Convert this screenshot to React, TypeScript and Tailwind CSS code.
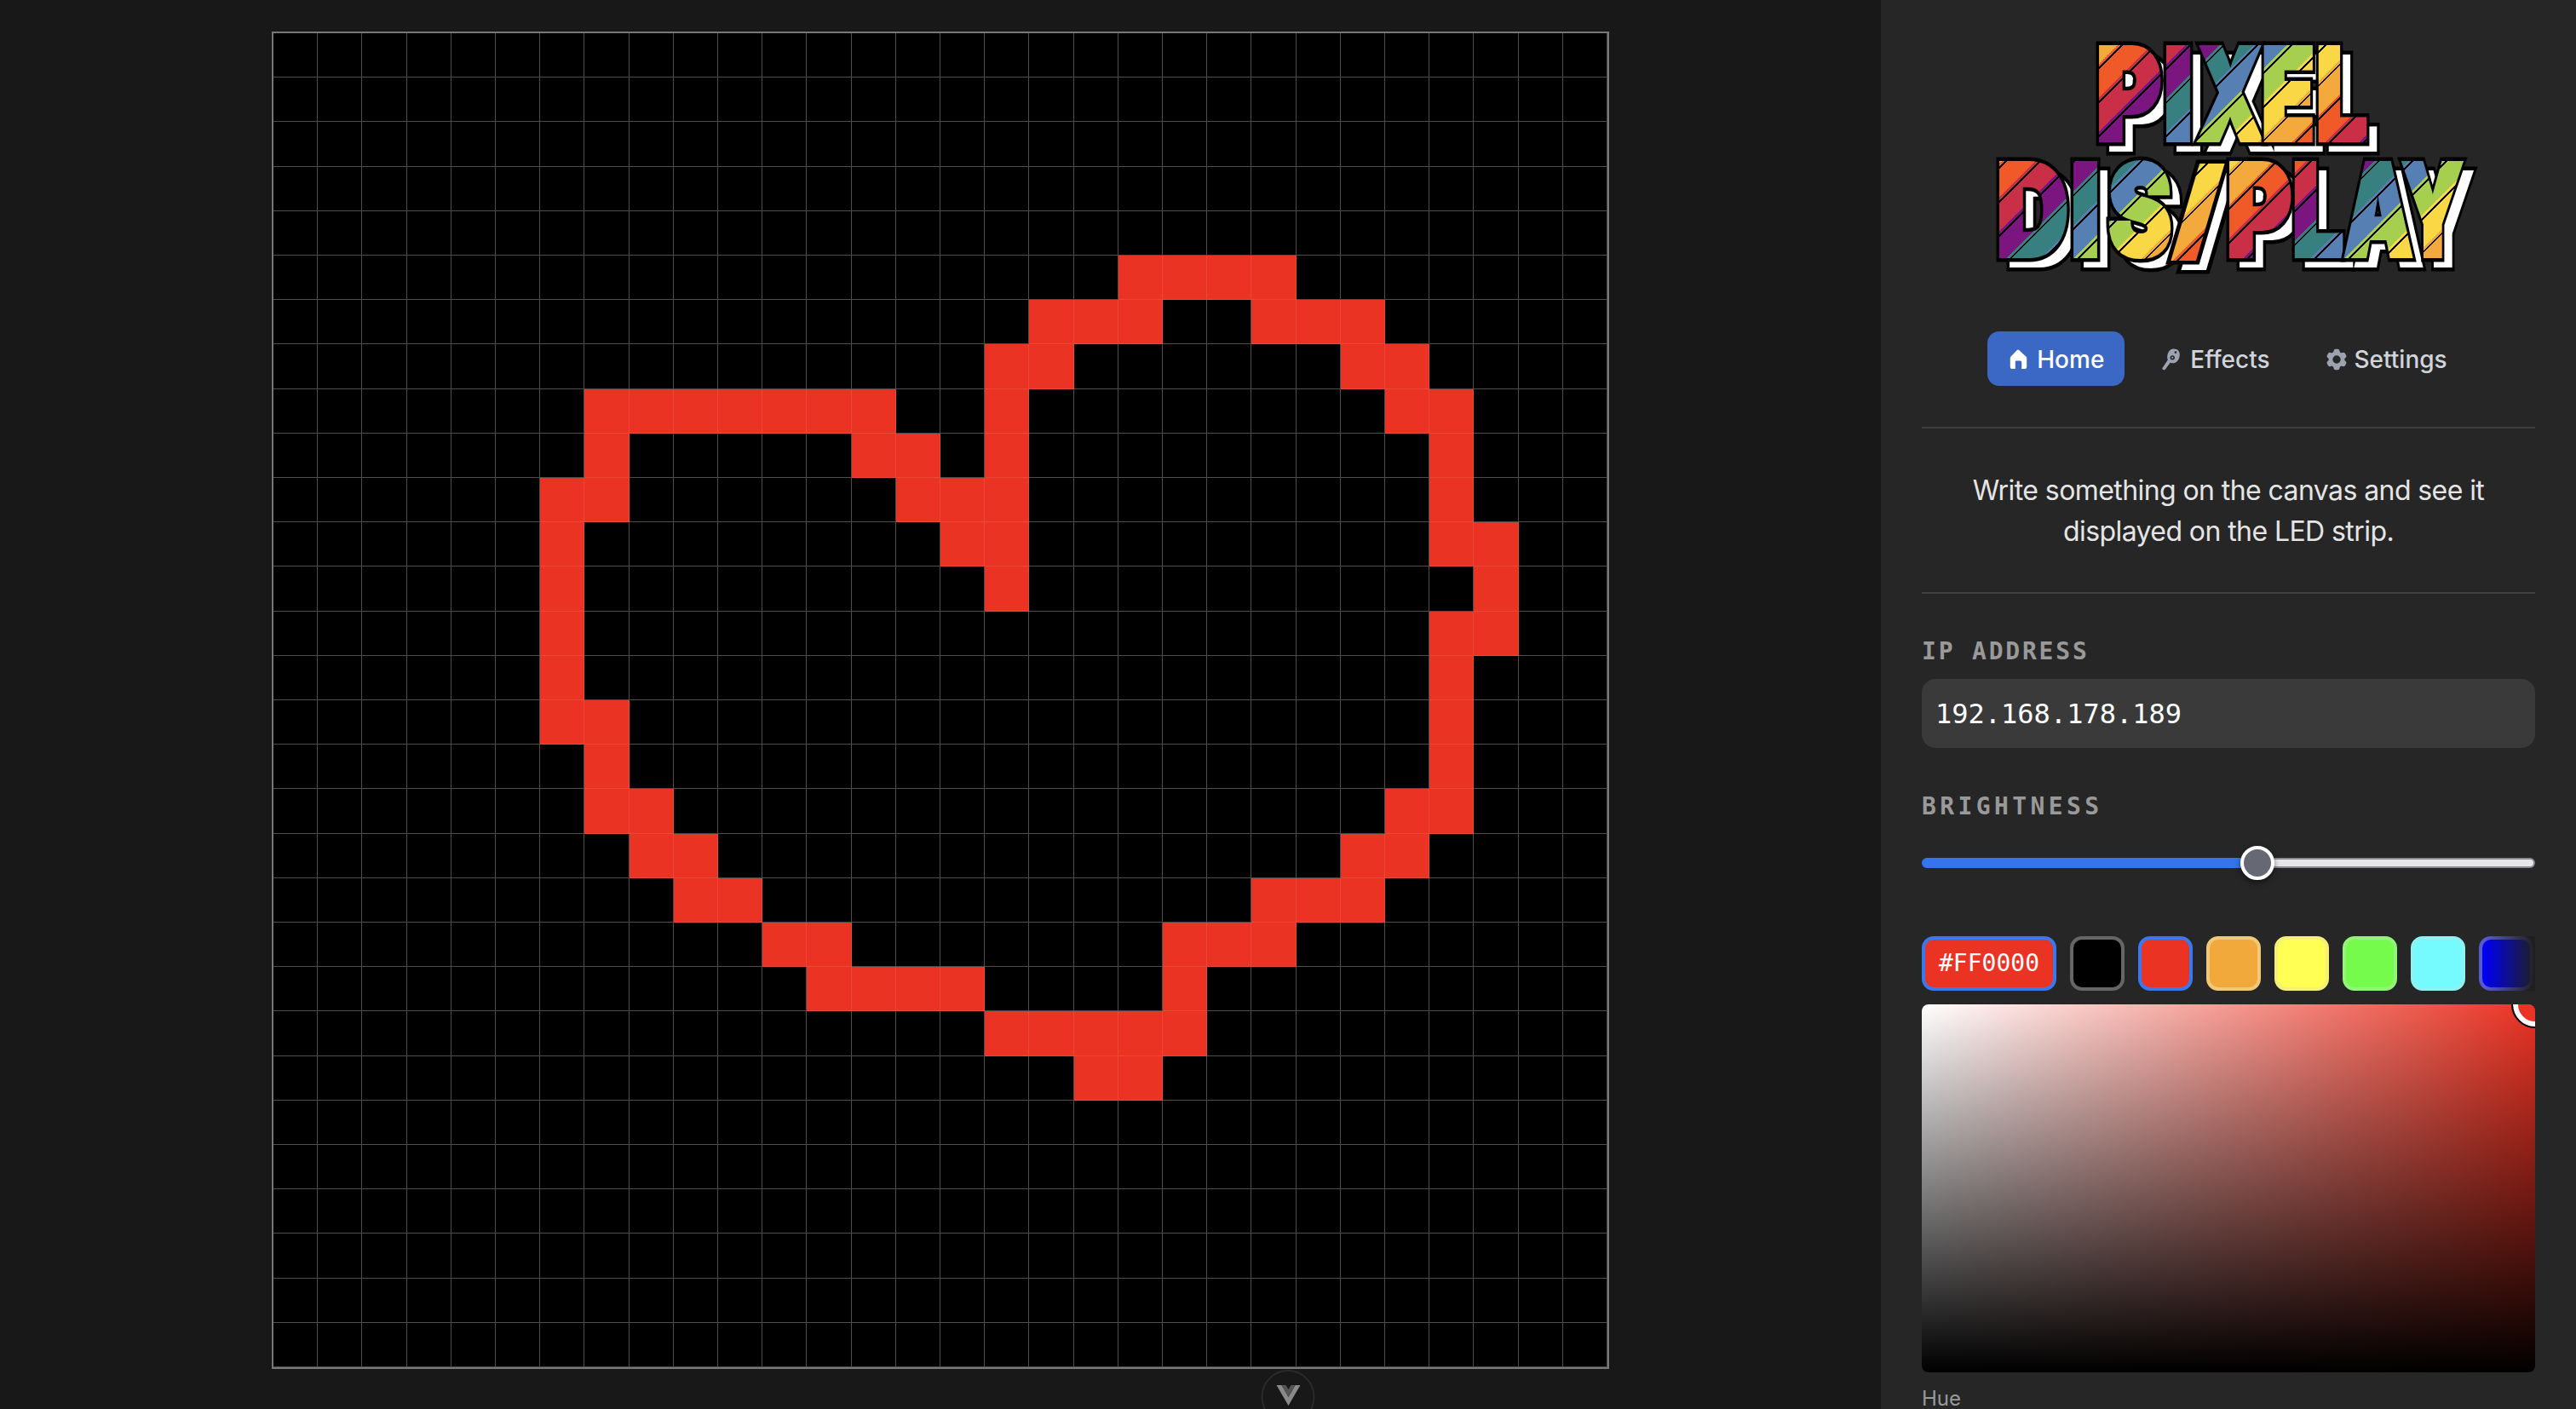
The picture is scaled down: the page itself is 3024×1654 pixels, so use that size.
import React from "react";
import { HiCog6Tooth } from "react-icons/hi2";

const HEART: Record<number, number[]> = {
  5: [19, 20, 21, 22],
  6: [17, 18, 19, 22, 23, 24],
  7: [16, 17, 24, 25],
  8: [7, 8, 9, 10, 11, 12, 13, 16, 25, 26],
  9: [7, 13, 14, 16, 26],
  10: [6, 7, 14, 15, 16, 26],
  11: [6, 15, 16, 26, 27],
  12: [6, 16, 27],
  13: [6, 26, 27],
  14: [6, 26],
  15: [6, 7, 26],
  16: [7, 26],
  17: [7, 8, 25, 26],
  18: [8, 9, 24, 25],
  19: [9, 10, 22, 23, 24],
  20: [11, 12, 20, 21, 22],
  21: [12, 13, 14, 15, 20],
  22: [16, 17, 18, 19, 20],
  23: [18, 19],
};

const BANDS = ["#EF5A28", "#C93048", "#7B1580", "#38807F", "#5680B4", "#A6CF50", "#FAD744", "#F3A93B"];

type Letter = { c: string; x: number; w: number; fs?: number; dy?: number };

const LINE_ONE: Letter[] = [
  { c: "P", x: 161, w: 76 },
  { c: "I", x: 240, w: 34 },
  { c: "X", x: 280, w: 76 },
  { c: "E", x: 355, w: 62 },
  { c: "L", x: 419, w: 60 },
];

const LINE_TWO: Letter[] = [
  { c: "D", x: 44, w: 84 },
  { c: "I", x: 131, w: 34 },
  { c: "S", x: 175, w: 74 },
  { c: "/", x: 252, w: 56, fs: 124, dy: -11 },
  { c: "P", x: 314, w: 76 },
  { c: "L", x: 391, w: 60 },
  { c: "A", x: 452, w: 80 },
  { c: "Y", x: 520, w: 71 },
];

const FONT_SIZE = 148;

function Glyph({ l, y, fill, stroke, sw }: { l: Letter; y: number; fill: string; stroke: string; sw: number }) {
  return (
    <text
      x={l.x}
      y={y + (l.dy ?? 0)}
      textLength={l.w}
      lengthAdjust="spacingAndGlyphs"
      fill={fill}
      stroke={stroke}
      strokeWidth={sw}
      strokeLinejoin="miter"
      style={{ fontFamily: "Inter, sans-serif", fontWeight: 900, fontSize: l.fs ?? FONT_SIZE }}>
      {l.c}
    </text>
  );
}

function LogoLine({ letters, y, id }: { letters: Letter[]; y: number; id: string }) {
  return (
    <g>
      <g transform="translate(12 11)">
        {letters.map((l, i) => (
          <Glyph key={i} l={l} y={y} fill="#000" stroke="#000" sw={15} />
        ))}
        {letters.map((l, i) => (
          <Glyph key={i} l={l} y={y} fill="#fff" stroke="#fff" sw={6} />
        ))}
      </g>
      {letters.map((l, i) => (
        <g key={i}>
          <Glyph l={l} y={y} fill="#000" stroke="#000" sw={15} />
          <mask id={id + i} maskUnits="userSpaceOnUse" x="0" y="0" width="660" height="320">
            <Glyph l={l} y={y} fill="#fff" stroke="#fff" sw={6} />
          </mask>
          <rect x="0" y="0" width="660" height="320" fill="url(#rainbow)" mask={`url(#${id + i})`} />
        </g>
      ))}
    </g>
  );
}

function Logo() {
  return (
    <svg width="660" height="320" viewBox="0 0 660 320" className="block ml-[44px] shrink-0">
      <defs>
        <linearGradient
          id="rainbow"
          gradientUnits="userSpaceOnUse"
          spreadMethod="repeat"
          x1="109.5"
          y1="109.5"
          x2="268.5"
          y2="268.5">
          {BANDS.map((color, i) => {
            const s = i / 8;
            return (
              <React.Fragment key={color}>
                <stop offset={s} stopColor={color} />
                <stop offset={s + 0.012} stopColor={color} />
                <stop offset={s + 0.012} stopColor="#000" />
                <stop offset={s + 0.021} stopColor="#000" />
                <stop offset={s + 0.021} stopColor={color} />
                <stop offset={s + 0.125} stopColor={color} />
              </React.Fragment>
            );
          })}
        </linearGradient>
      </defs>
      <LogoLine letters={LINE_ONE} y={144} id="a" />
      <LogoLine letters={LINE_TWO} y={280} id="b" />
    </svg>
  );
}

function HomeIcon() {
  return (
    <svg width="24" height="26" viewBox="0 0 24 26" fill="#fff">
      <path d="M10.6 2.2a2 2 0 0 1 2.8 0l8.2 7.6a2 2 0 0 1 .6 1.5V22a2 2 0 0 1-2 2h-4v-8a1.5 1.5 0 0 0-1.5-1.5h-5.4A1.5 1.5 0 0 0 8.8 16v8h-4a2 2 0 0 1-2-2V11.300a2 2 0 0 1 .6-1.500z" />
    </svg>
  );
}

function EffectsIcon() {
  return (
    <svg width="26" height="28" viewBox="0 0 24 26" fill="#9CA3AF">
      <path d="M3 22.500 9 13.500l3.200 2.400-6 8a1.900 1.900 0 0 1-3.200-1.400z" />
      <path fillRule="evenodd" d="M14.500 1.500c4.600-.6 7.900 2 7.500 6.600-.3 4-2.300 8-6.200 8.800-3.600.7-7.100-2-7.300-5.600-.2-4.300 1.800-9.200 6-9.800zm-.4 7a2.500 2.500 0 1 0 .01 5 2.500 2.500 0 0 0-.01-5zm0 1.500a1 1 0 1 1-.01 2 1 1 0 0 1 .01-2zM17.500 4a1.200 1.200 0 1 0 .01 2.400A1.200 1.200 0 0 0 17.500 4z" />
    </svg>
  );
}

function VueMark() {
  return (
    <svg width="28" height="24" viewBox="0 0 28 24" className="mx-auto mt-[16px]">
      <path d="M0 0h6l8 14 8-14h6L14 24z" fill="#8a8a8a" />
      <path d="M6 0h5l3 5 3-5h5l-8 14z" fill="#555" />
    </svg>
  );
}

function PixelCanvas() {
  const cells = [];
  for (let r = 0; r < 30; r++) {
    for (let c = 0; c < 30; c++) {
      const on = HEART[r]?.includes(c);
      cells.push(
        <div
          key={r + "-" + c}
          className={
            on
              ? "bg-[#EB3324] border-r border-b border-white/10"
              : "bg-black border-r border-b border-white/30"
          }
        />,
      );
    }
  }
  return (
    <div className="w-[1570px] h-[1570px] shrink-0 border-2 border-[#777] grid grid-cols-[repeat(30,minmax(0,1fr))] grid-rows-[repeat(30,minmax(0,1fr))]">
      {cells}
    </div>
  );
}

const SWATCHES = [
  "bg-black border-[#666]",
  "bg-[#EB3324] border-[#3B78F0]",
  "bg-[#F2A93B] border-[#F0C878]",
  "bg-[#FFFF54] border-[#F4F07A]",
  "bg-[#75FB4C] border-[#93F27A]",
  "bg-[#75FBFD] border-[#8FF2F2]",
  "bg-[#0000F5] border-[#5A5ACF]",
];

function Sidebar() {
  return (
    <aside className="w-[816px] h-full shrink-0 bg-[#262626] px-12 pt-[20px] flex flex-col">
      <Logo />

      <nav className="mt-[49px] flex justify-center items-center text-[28px] font-medium">
        <a className="h-16 w-[161px] pt-[2px] rounded-[14px] bg-[#3B68C4] text-white flex items-center justify-center gap-[10px]">
          <HomeIcon />
          Home
        </a>
        <a className="h-16 ml-[15px] pt-[2px] px-[26px] text-[#D1D5DB] flex items-center gap-[10px]">
          <EffectsIcon />
          Effects
        </a>
        <a className="h-16 ml-[11px] pt-[2px] px-[26px] text-[#D1D5DB] flex items-center gap-[6px]">
          <HiCog6Tooth className="w-[30px] h-[30px] text-[#9CA3AF]" />
          Settings
        </a>
      </nav>

      <p className="mt-12 pt-[49px] pb-[47px] border-y-2 border-[#3f3f3f] text-center text-[32px] leading-[48px] tracking-[-0.58px] text-[#E5E5E5]">
        Write something on the canvas and see it
        <br />
        displayed on the LED strip.
      </p>

      <label className="mt-[52px] text-[28px] leading-8 font-bold text-[#999] tracking-[2.8px] font-['DejaVu_Sans_Mono',monospace]">
        IP ADDRESS
      </label>
      <div className="mt-4 h-[81px] shrink-0 rounded-[16px] bg-[#3A3A3A] px-[16px] flex items-center text-[32px] text-white font-['DejaVu_Sans_Mono',monospace]">
        192.168.178.189
      </div>

      <label className="mt-[53px] text-[28px] leading-8 font-bold text-[#999] tracking-[4.4px] font-['DejaVu_Sans_Mono',monospace]">
        BRIGHTNESS
      </label>
      <div className="relative mt-[30px] h-10 shrink-0 flex items-center">
        <div className="w-[394px] h-3 rounded-l-full bg-[#3574ED]" />
        <div className="flex-1 h-3 rounded-r-full bg-[#E6E6EA] border-2 border-[#8A8A90]" />
        <div className="absolute left-[374px] top-0 w-10 h-10 rounded-full bg-[#666874] border-4 border-white shadow-[0_3px_6px_rgba(0,0,0,0.5)]" />
      </div>

      <div className="relative mt-[66px] h-16 flex gap-4 overflow-hidden shrink-0">
        <div className="w-[158px] h-16 shrink-0 rounded-[14px] border-4 border-[#3B78F0] bg-[#EB3324] flex items-center justify-center text-[28px] text-white font-['DejaVu_Sans_Mono',monospace]">
          #FF0000
        </div>
        {SWATCHES.map(s => (
          <div key={s} className={"w-16 h-16 shrink-0 rounded-[14px] border-4 " + s} />
        ))}
        <div className="absolute right-0 top-0 bottom-0 w-[60px] bg-gradient-to-r from-transparent to-[#1f1f1f]" />
      </div>

      <div className="relative mt-4 h-[432px] shrink-0 rounded-lg overflow-hidden bg-[linear-gradient(to_top,#000,transparent),linear-gradient(to_right,#fff,#EB3324)]">
        <div className="absolute right-[-26px] top-[-26px] w-[52px] h-[52px] rounded-full border-[6px] border-white bg-[#EB3324] outline-2 outline-black" />
      </div>

      <div className="mt-[15px] text-[24px] leading-8 text-[#999]">Hue</div>
    </aside>
  );
}

export default function App() {
  return (
    <div className="relative w-screen h-screen overflow-hidden flex bg-[#181818] font-['Inter',sans-serif]">
      <main className="flex-1 flex justify-center pt-[37px]">
        <PixelCanvas />
      </main>
      <Sidebar />
      <div className="absolute left-1/2 -translate-x-1/2 top-[1608px] w-[63px] h-[63px] rounded-full border-2 border-[#2a2a2a] bg-[#181818]">
        <VueMark />
      </div>
    </div>
  );
}
